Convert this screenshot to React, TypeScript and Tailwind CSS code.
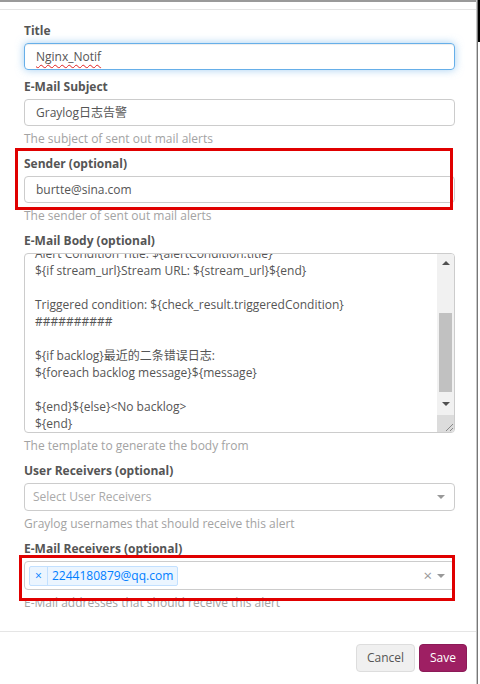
const bodyLines = [
  "Alert Condition Title: ${alertCondition.title}",
  "${if stream_url}Stream URL: ${stream_url}${end}",
  "",
  "Triggered condition: ${check_result.triggeredCondition}",
  "##########",
  "",
  "${if backlog}最近的二条错误日志:",
  "${foreach backlog message}${message}",
  "",
  "${end}${else}<No backlog>",
  "${end}",
];

function Label({ children }: { children: React.ReactNode }) {
  return <label className="block h-[17px] leading-[17px] font-bold text-[#555] mb-[4px]">{children}</label>;
}

function Help({ children }: { children: React.ReactNode }) {
  return <p className="mt-[4px] h-[17px] leading-[17px] text-[#a3a3a3]">{children}</p>;
}

function Caret() {
  return <span className="w-0 h-0 border-l-[4px] border-r-[4px] border-t-[4px] border-l-transparent border-r-transparent border-t-[#999]" />;
}

export default function App() {
  return (
    <div className="relative flex w-[480px] h-[684px] bg-white overflow-hidden text-[12px] font-['Open_Sans','Noto_Sans_CJK_SC',sans-serif]">
      <div className="w-[477px] flex flex-col border-r border-[#c8c8c8]">
        <div className="h-[2px] bg-[#9a9a9a]" />
        <div className="h-[7px] border-b border-[#e5e5e5] box-content" />

        <div className="flex-1 pl-[24px] pr-[21px] pt-[12px]">
          <div className="mb-[8px]">
            <Label>Title</Label>
            <div className="h-[27px] flex items-center px-[11px] rounded border border-[#66afe9] shadow-[inset_0_1px_1px_rgba(0,0,0,.075),0_0_8px_rgba(102,175,233,.6)] text-[#555]">
              <span className="underline decoration-wavy decoration-[#e02020] decoration-1 underline-offset-[3px]">Nginx_Notif</span>
            </div>
          </div>

          <div className="mb-[8px]">
            <Label>E-Mail Subject</Label>
            <div className="h-[27px] flex items-center px-[11px] rounded border border-[#ccc] text-[#555]">Graylog日志告警</div>
            <Help>The subject of sent out mail alerts</Help>
          </div>

          <div className="mb-[8px]">
            <Label>Sender (optional)</Label>
            <div className="h-[27px] flex items-center px-[11px] rounded border border-[#ccc] text-[#555]">burtte@sina.com</div>
            <Help>The sender of sent out mail alerts</Help>
          </div>

          <div className="mb-[8px]">
            <Label>E-Mail Body (optional)</Label>
            <div className="h-[180px] flex rounded border border-[#ccc] overflow-hidden">
              <div className="flex-1 overflow-hidden pl-[10px] text-[#555] leading-[17px]">
                <div className="-mt-[9px]">
                  {bodyLines.map((l, i) => (
                    <div key={i} className="h-[17px] whitespace-pre">{l}</div>
                  ))}
                </div>
              </div>
              <div className="w-[17px] flex flex-col bg-[#f1f1f1]">
                <div className="h-[17px] flex items-center justify-center">
                  <span className="w-0 h-0 border-l-[4px] border-r-[4px] border-b-[4px] border-l-transparent border-r-transparent border-b-[#505050]" />
                </div>
                <div className="h-[42px]" />
                <div className="h-[79px] mx-[2px] bg-[#c1c1c1]" />
                <div className="flex-1 flex items-center justify-center">
                  <span className="w-0 h-0 border-l-[4px] border-r-[4px] border-t-[4px] border-l-transparent border-r-transparent border-t-[#505050]" />
                </div>
                <div className="h-[17px] bg-[#dcdcdc] flex items-end justify-end">
                  <svg width="10" height="10" viewBox="0 0 10 10">
                    <path d="M9 2 L2 9 M9 6 L6 9" stroke="#888" strokeWidth="1" />
                  </svg>
                </div>
              </div>
            </div>
            <Help>The template to generate the body from</Help>
          </div>

          <div className="mb-[8px]">
            <Label>User Receivers (optional)</Label>
            <div className="h-[28px] flex items-center pl-[8px] pr-[9px] rounded border border-[#ccc]">
              <span className="flex-1 text-[#aaa]">Select User Receivers</span>
              <Caret />
            </div>
            <Help>Graylog usernames that should receive this alert</Help>
          </div>

          <div>
            <Label>E-Mail Receivers (optional)</Label>
            <div className="h-[29px] flex items-center pl-[4px] pr-[9px] rounded border border-[#ccc]">
              <div className="flex-1 flex">
                <span className="flex h-[20px] items-stretch rounded-[2px] border border-[#c2e0ff] bg-[#ebf5ff] text-[#007eff]">
                  <span className="w-[18px] flex items-center justify-center border-r border-[#c2e0ff]">×</span>
                  <span className="flex items-center px-[4px]">2244180879@qq.com</span>
                </span>
              </div>
              <span className="text-[#999] text-[15px] leading-none mr-[5px]">×</span>
              <Caret />
            </div>
            <Help>E-Mail addresses that should receive this alert</Help>
          </div>
        </div>

        <div className="h-[53px] border-t border-[#e5e5e5] flex justify-end items-start gap-[4px] pt-[12px] pr-[9px]">
          <button className="h-[28px] px-[10px] rounded border border-[#ddd] bg-[#f0f0f0] text-[#555]">Cancel</button>
          <button className="h-[28px] px-[10px] rounded border border-[#8c1a57] bg-[#9e1f63] text-white">Save</button>
        </div>
      </div>

      <div className="flex-1 flex flex-col border-l border-[#777]">
        <div className="h-[42px] bg-black" />
        <div className="flex-1 bg-white" />
      </div>

      <div className="absolute left-[15px] top-[148px] w-[438px] h-[62px] border-[3px] border-[#e00000]" />
      <div className="absolute left-[19px] top-[555px] w-[436px] h-[46px] border-[3px] border-[#e00000]" />
    </div>
  );
}
